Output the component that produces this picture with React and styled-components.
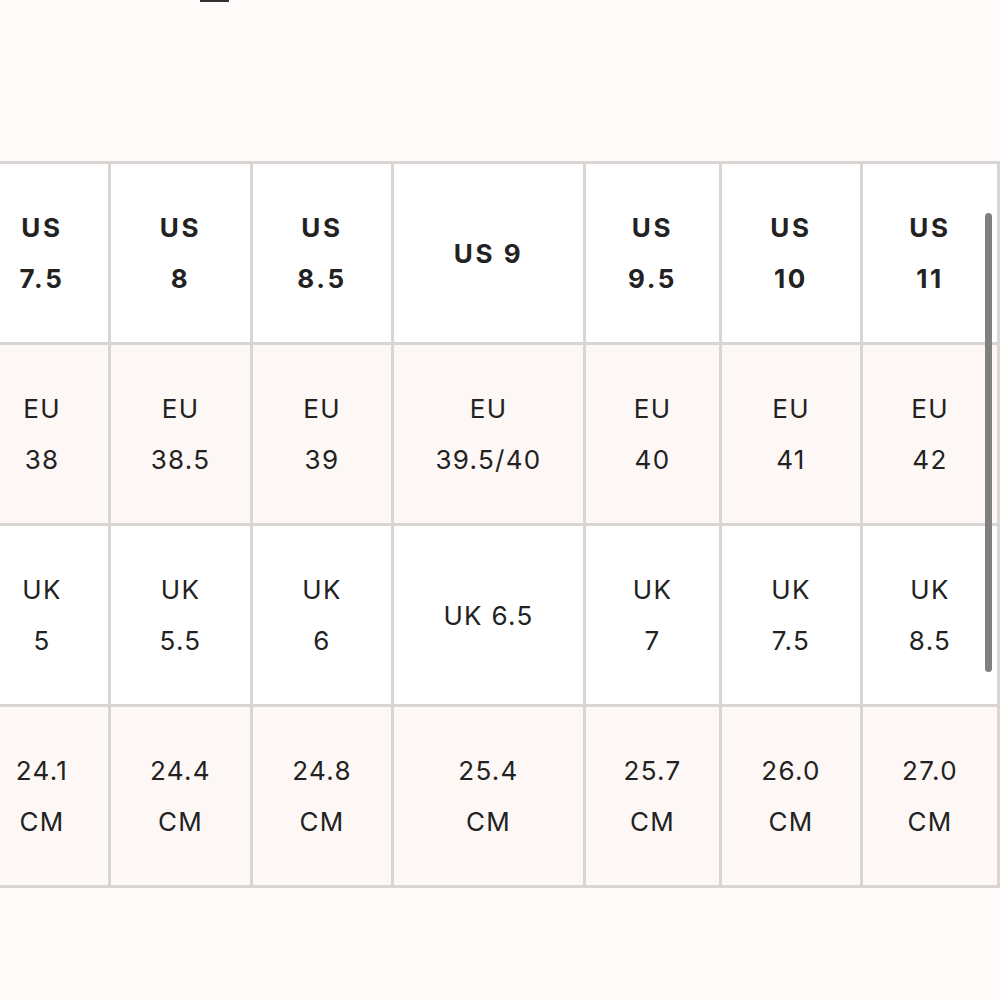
import React, { useCallback } from "react";
import styled, { createGlobalStyle } from "styled-components";

const GlobalStyle = createGlobalStyle`
  html, body {
    margin: 0;
    padding: 0;
    background: #fefbfa;
    min-height: 100vh;
  }
  body {
    font-family: Inter, "Noto Sans", "Liberation Sans", sans-serif;
    color: #222;
  }
`;

const Page = styled.div`
  width: 1000px;
  height: 1000px;
  overflow: hidden;
  background: #fefbfa;
`;

const TabArea = styled.div`
  height: 161px;
  position: relative;
`;

const TabIndicator = styled.div`
  position: absolute;
  left: 200px;
  top: 0;
  width: 29px;
  height: 2px;
  background: #333;
`;

const TableFrame = styled.div`
  position: relative;
`;

const Scroller = styled.div`
  width: 1000px;
  overflow-x: auto;
  scrollbar-width: none;
  &::-webkit-scrollbar {
    display: none;
  }
`;

const Grid = styled.div`
  display: grid;
  grid-template-columns: 135px 142px 141px 192px 136px 141px 140px;
  grid-auto-rows: 181px;
  width: 1027px;
  border-bottom: 3px solid #d9d5d2;
`;

const Cell = styled.div`
  box-sizing: border-box;
  border-top: 3px solid #d9d5d2;
  border-left: 3px solid #d9d5d2;
  border-right: ${(p) => (p.$last ? "3px solid #d9d5d2" : "none")};
  background: ${(p) => (p.$tinted ? "#fdf8f6" : "#ffffff")};
  display: flex;
  flex-direction: column;
  align-items: center;
  justify-content: center;
  text-align: center;
  font-size: 26px;
  line-height: 51px;
  letter-spacing: ${(p) => (p.$bold ? "2.6px" : "1.3px")};
  font-weight: ${(p) => (p.$bold ? 700 : 400)};
  color: #222;
  white-space: nowrap;
`;

const ScrollThumb = styled.div`
  position: absolute;
  left: 985px;
  top: 52px;
  width: 7px;
  height: 459px;
  border-radius: 4px;
  background: #808080;
`;

const rows = [
  {
    bold: true,
    tinted: false,
    cells: [["US", "7.5"], ["US", "8"], ["US", "8.5"], ["US 9"], ["US", "9.5"], ["US", "10"], ["US", "11"]],
  },
  {
    tinted: true,
    cells: [["EU", "38"], ["EU", "38.5"], ["EU", "39"], ["EU", "39.5/40"], ["EU", "40"], ["EU", "41"], ["EU", "42"]],
  },
  {
    tinted: false,
    cells: [["UK", "5"], ["UK", "5.5"], ["UK", "6"], ["UK 6.5"], ["UK", "7"], ["UK", "7.5"], ["UK", "8.5"]],
  },
  {
    tinted: true,
    cells: [["24.1", "CM"], ["24.4", "CM"], ["24.8", "CM"], ["25.4", "CM"], ["25.7", "CM"], ["26.0", "CM"], ["27.0", "CM"]],
  },
];

const App = () => {
  const scrollRef = useCallback((node) => {
    if (node) node.scrollLeft = 27;
  }, []);

  return (
    <Page>
      <GlobalStyle />
      <TabArea>
        <TabIndicator />
      </TabArea>
      <TableFrame>
        <Scroller ref={scrollRef}>
          <Grid>
            {rows.map((row, r) =>
              row.cells.map((lines, c) => (
                <Cell
                  key={`${r}-${c}`}
                  $bold={row.bold}
                  $tinted={row.tinted}
                  $last={c === row.cells.length - 1}
                >
                  {lines.map((line) => (
                    <span key={line}>{line}</span>
                  ))}
                </Cell>
              ))
            )}
          </Grid>
        </Scroller>
        <ScrollThumb />
      </TableFrame>
    </Page>
  );
};

export default App;
